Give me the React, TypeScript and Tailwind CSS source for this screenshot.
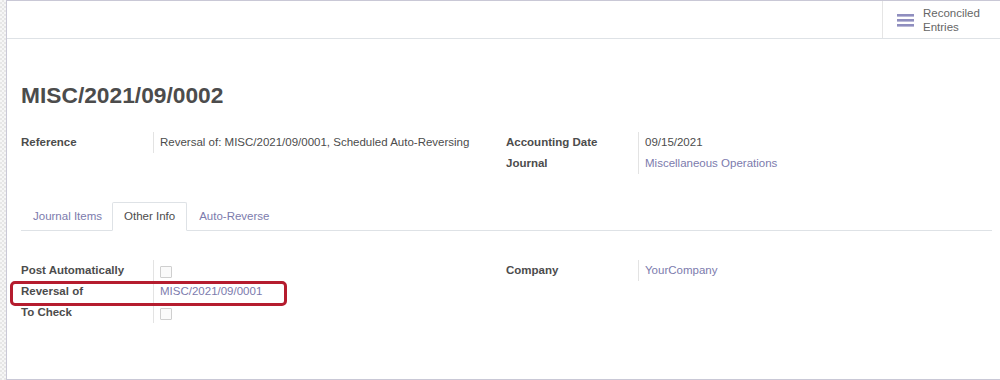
export default function App() {
  return (
    <div className="flex h-[380px] w-[1000px] bg-white font-['Liberation_Sans',Arial,sans-serif] text-[11.5px] text-[#4c4c4c]">
      {/* Hatched edge of the sheet */}
      <div className="w-[6px] shrink-0 bg-[repeating-conic-gradient(#e6e6e6_0_25%,#f6f6f6_0_50%)] bg-[length:4px_4px]" />
      <div className="flex flex-1 flex-col border-t border-b border-l border-[#c9c8d6]">
        {/* Button box */}
        <div className="flex h-[38px] shrink-0 justify-end border-b border-[#dee2e6]">
          <div className="flex w-[118px] items-center gap-[9px] border-l border-[#e5e5e5] pl-[14px]">
            <svg width="17" height="14" viewBox="0 0 17 14">
              <rect x="0" y="1" width="17" height="2.6" fill="#8f8ebf" />
              <rect x="0" y="6" width="17" height="2.6" fill="#8f8ebf" />
              <rect x="0" y="11" width="17" height="2.6" fill="#8f8ebf" />
            </svg>
            <div className="leading-[14px] text-[#666666]">
              Reconciled
              <br />
              Entries
            </div>
          </div>
        </div>

        <div className="pr-[8px] pl-[14px]">
          <h1 className="mt-[42px] text-[22.75px] font-bold leading-[28px] text-[#4c4c4c]">MISC/2021/09/0002</h1>

          {/* Main fields */}
          <div className="mt-[23px] flex">
            <div className="w-[485px]">
              <FieldRow label="Reference">Reversal of: MISC/2021/09/0001, Scheduled Auto-Reversing</FieldRow>
            </div>
            <div>
              <FieldRow label="Accounting Date">09/15/2021</FieldRow>
              <FieldRow label="Journal">
                <span className="text-[#7c7bad]">Miscellaneous Operations</span>
              </FieldRow>
            </div>
          </div>

          {/* Tabs */}
          <div className="mt-[28px] flex border-b border-[#dee2e6] leading-[14px]">
            <div className="py-[7px] pr-[10px] pl-[12px] text-[#7c7bad]">Journal Items</div>
            <div className="-mb-px rounded-t-[2px] border border-b-white border-[#dee2e6] bg-white px-[11px] py-[6px]">Other Info</div>
            <div className="px-[12px] py-[7px] text-[#7c7bad]">Auto-Reverse</div>
          </div>

          {/* Other info */}
          <div className="mt-[29px] flex">
            <div className="w-[485px]">
              <FieldRow label="Post Automatically">
                <Checkbox />
              </FieldRow>
              <div className="relative">
                <div className="pointer-events-none absolute top-0 left-[-11px] h-[25px] w-[277px] rounded-[5px] border-[3px] border-[#b51c2e]" />
                <FieldRow label="Reversal of">
                  <span className="text-[#7c7bad]">MISC/2021/09/0001</span>
                </FieldRow>
              </div>
              <FieldRow label="To Check">
                <Checkbox />
              </FieldRow>
            </div>
            <div>
              <FieldRow label="Company">
                <span className="text-[#7c7bad]">YourCompany</span>
              </FieldRow>
            </div>
          </div>
        </div>
      </div>
    </div>
  );
}

function FieldRow({ label, children }: { label: string; children: React.ReactNode }) {
  return (
    <div className="flex h-[21px] leading-[21px]">
      <div className="w-[132px] shrink-0 font-bold">{label}</div>
      <div className="flex items-center border-l border-[#e3e3e3] pl-[6px] whitespace-nowrap">{children}</div>
    </div>
  );
}

function Checkbox() {
  return <div className="mt-[2px] h-[12px] w-[12px] rounded-[1px] border border-[#cfcfcf] bg-[#fafafa]" />;
}
